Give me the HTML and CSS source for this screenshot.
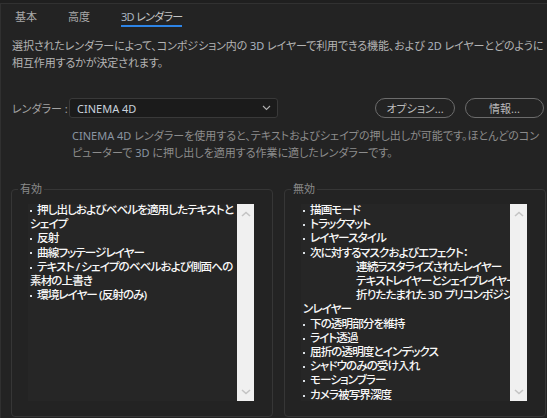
FILE: index.html
```html
<!DOCTYPE html>
<html lang="ja">
<head>
<meta charset="utf-8">
<link rel="stylesheet" href="styles.css">
</head>
<body>
<div class="panel">
  <div class="tabs">
    <div class="tab">基本</div>
    <div class="tab">高度</div>
    <div class="tab active"><span class="lat">3D</span> レンダラー</div>
  </div>
  <div class="intro">
    <div class="line">選択されたレンダラーによって、コンポジション内の <span class="lat">3D</span> レイヤーで利用できる機能、および <span class="lat">2D</span> レイヤーとどのように</div>
    <div class="line">相互作用するかが決定されます。</div>
  </div>
  <div class="renderer-row">
    <span class="row-label">レンダラー :</span>
    <div class="select">
      <span class="select-value">CINEMA 4D</span>
      <svg class="chev" width="9" height="6" viewBox="0 0 9 6"><path d="M1 1 L4.5 4.5 L8 1" fill="none" stroke="#b0b0b0" stroke-width="1.1"/></svg>
    </div>
    <div class="buttons">
      <div class="btn btn-opt">オプション...</div>
      <div class="btn btn-info">情報...</div>
    </div>
  </div>
  <div class="note">
    <div class="line"><span class="lat">CINEMA 4D</span> レンダラーを使用すると、テキストおよびシェイプの押し出しが可能です。ほとんどのコン</div>
    <div class="line">ピューターで <span class="lat">3D</span> に押し出しを適用する作業に適したレンダラーです。</div>
  </div>
  <div class="groups">
    <fieldset class="group">
      <legend>有効</legend>
      <div class="list">
        <div class="items">
          <div class="row"><span class="dot"></span>押し出しおよびベベルを適用したテキストと</div>
          <div class="row">シェイプ</div>
          <div class="row"><span class="dot"></span>反射</div>
          <div class="row"><span class="dot"></span>曲線フッテージレイヤー</div>
          <div class="row"><span class="dot"></span>テキスト / シェイプのベベルおよび側面への</div>
          <div class="row">素材の上書き</div>
          <div class="row"><span class="dot"></span>環境レイヤー (反射のみ)</div>
        </div>
        <div class="scroll">
          <svg width="10" height="6" viewBox="0 0 10 6"><path d="M1 5 L5 1.5 L9 5" fill="none" stroke="#c4c4c4" stroke-width="1.6"/></svg>
          <svg width="10" height="6" viewBox="0 0 10 6"><path d="M1 1 L5 4.5 L9 1" fill="none" stroke="#c4c4c4" stroke-width="1.6"/></svg>
        </div>
      </div>
    </fieldset>
    <fieldset class="group">
      <legend>無効</legend>
      <div class="list">
        <div class="items">
          <div class="row"><span class="dot"></span>描画モード</div>
          <div class="row"><span class="dot"></span>トラックマット</div>
          <div class="row"><span class="dot"></span>レイヤースタイル</div>
          <div class="row"><span class="dot"></span>次に対するマスクおよびエフェクト：</div>
          <div class="row sub">連続ラスタライズされたレイヤー</div>
          <div class="row sub">テキストレイヤーとシェイプレイヤー</div>
          <div class="row sub">折りたたまれた <span class="lat">3D</span> プリコンポジショ</div>
          <div class="row">ンレイヤー</div>
          <div class="row"><span class="dot"></span>下の透明部分を維持</div>
          <div class="row"><span class="dot"></span>ライト透過</div>
          <div class="row"><span class="dot"></span>屈折の透明度とインデックス</div>
          <div class="row"><span class="dot"></span>シャドウのみの受け入れ</div>
          <div class="row"><span class="dot"></span>モーションブラー</div>
          <div class="row"><span class="dot"></span>カメラ被写界深度</div>
        </div>
        <div class="scroll">
          <svg width="10" height="6" viewBox="0 0 10 6"><path d="M1 5 L5 1.5 L9 5" fill="none" stroke="#c4c4c4" stroke-width="1.6"/></svg>
          <svg width="10" height="6" viewBox="0 0 10 6"><path d="M1 1 L5 4.5 L9 1" fill="none" stroke="#c4c4c4" stroke-width="1.6"/></svg>
        </div>
      </div>
    </fieldset>
  </div>
</div>
</body>
</html>
```
FILE: styles.css
```css
html, body {
  margin: 0;
  padding: 0;
  background: #1f1f1f;
  width: 547px;
  height: 418px;
  overflow: hidden;
}
body {
  font-family: "Noto Sans", "Noto Sans CJK JP", sans-serif;
  font-size: 11px;
  font-feature-settings: "palt" 1;
}
.panel {
  margin-top: 3px;
  height: 415px;
  box-sizing: border-box;
  background: #232323;
  border-top: 1px solid #313131;
  border-left: 1px solid #303030;
}
.tabs {
  display: flex;
  gap: 31px;
  padding: 5px 0 0 14px;
}
.tab {
  line-height: 16px;
  color: #a8a8a8;
  border-bottom: 2px solid transparent;
}
.tab.active {
  color: #c4c4c4;
  border-bottom-color: #2d84e6;
  letter-spacing: -0.7px;
}
.lat {
  color: #a9b3c0;
}
.intro {
  margin: 10px 0 0 11px;
  line-height: 17px;
  color: #b4b4b4;
  white-space: nowrap;
  letter-spacing: -0.1px;
}
.renderer-row {
  display: flex;
  align-items: center;
  height: 20px;
  margin-top: 27px;
  padding-left: 11px;
}
.row-label {
  width: 57px;
  color: #a2a2a2;
  white-space: nowrap;
}
.select {
  width: 209px;
  height: 20px;
  box-sizing: border-box;
  background: #1b1b1b;
  border: 1px solid #393939;
  border-radius: 3px;
  display: flex;
  align-items: center;
  justify-content: space-between;
  padding: 0 6px 0 7px;
}
.select-value {
  color: #c9d2dc;
}
.buttons {
  display: flex;
  gap: 10px;
  margin-left: auto;
  padding-right: 3px;
}
.btn {
  height: 20px;
  box-sizing: border-box;
  border: 1px solid #6c6c6c;
  border-radius: 10px;
  color: #bcbcbc;
  display: flex;
  align-items: center;
  justify-content: center;
}
.btn-opt { width: 80px; }
.btn-info { width: 79px; }
.note {
  margin: 9px 0 0 71px;
  line-height: 17px;
  color: #8c8c8c;
  white-space: nowrap;
}
.note .lat {
  color: #8a95a2;
}
.groups {
  display: flex;
  gap: 11px;
  margin-top: 21px;
  padding-left: 10px;
}
.group {
  width: 262px;
  box-sizing: border-box;
  margin: 0;
  padding: 0;
  border: 1px solid #363636;
  border-radius: 4px;
  min-width: 0;
}
.group legend {
  margin-left: 6px;
  padding: 0 2px;
  line-height: 14px;
  color: #8a8a8a;
}
.list {
  display: flex;
  margin: 8px 0 15px 16px;
  width: 226px;
  height: 197px;
}
.items {
  width: 209px;
  background: #262626;
  overflow: hidden;
  white-space: nowrap;
  color: #f8f8f8;
  font-size: 11.6px;
  font-weight: 500;
  padding: 0 0 0 2px;
  box-sizing: border-box;
  letter-spacing: -0.95px;
}
.row {
  line-height: 14.2px;
  position: relative;
  top: -1px;
}
.row.sub {
  padding-left: 53px;
}
.dot {
  display: inline-block;
  width: 2px;
  height: 2px;
  background: #d8dde2;
  margin-right: 5px;
  vertical-align: middle;
}
.items .lat {
  color: #eef2f8;
  letter-spacing: -0.3px;
}
.scroll {
  width: 17px;
  background: #f0f0f0;
  display: flex;
  flex-direction: column;
  justify-content: space-between;
  align-items: center;
  padding: 7px 0 6px;
  box-sizing: border-box;
}
```
